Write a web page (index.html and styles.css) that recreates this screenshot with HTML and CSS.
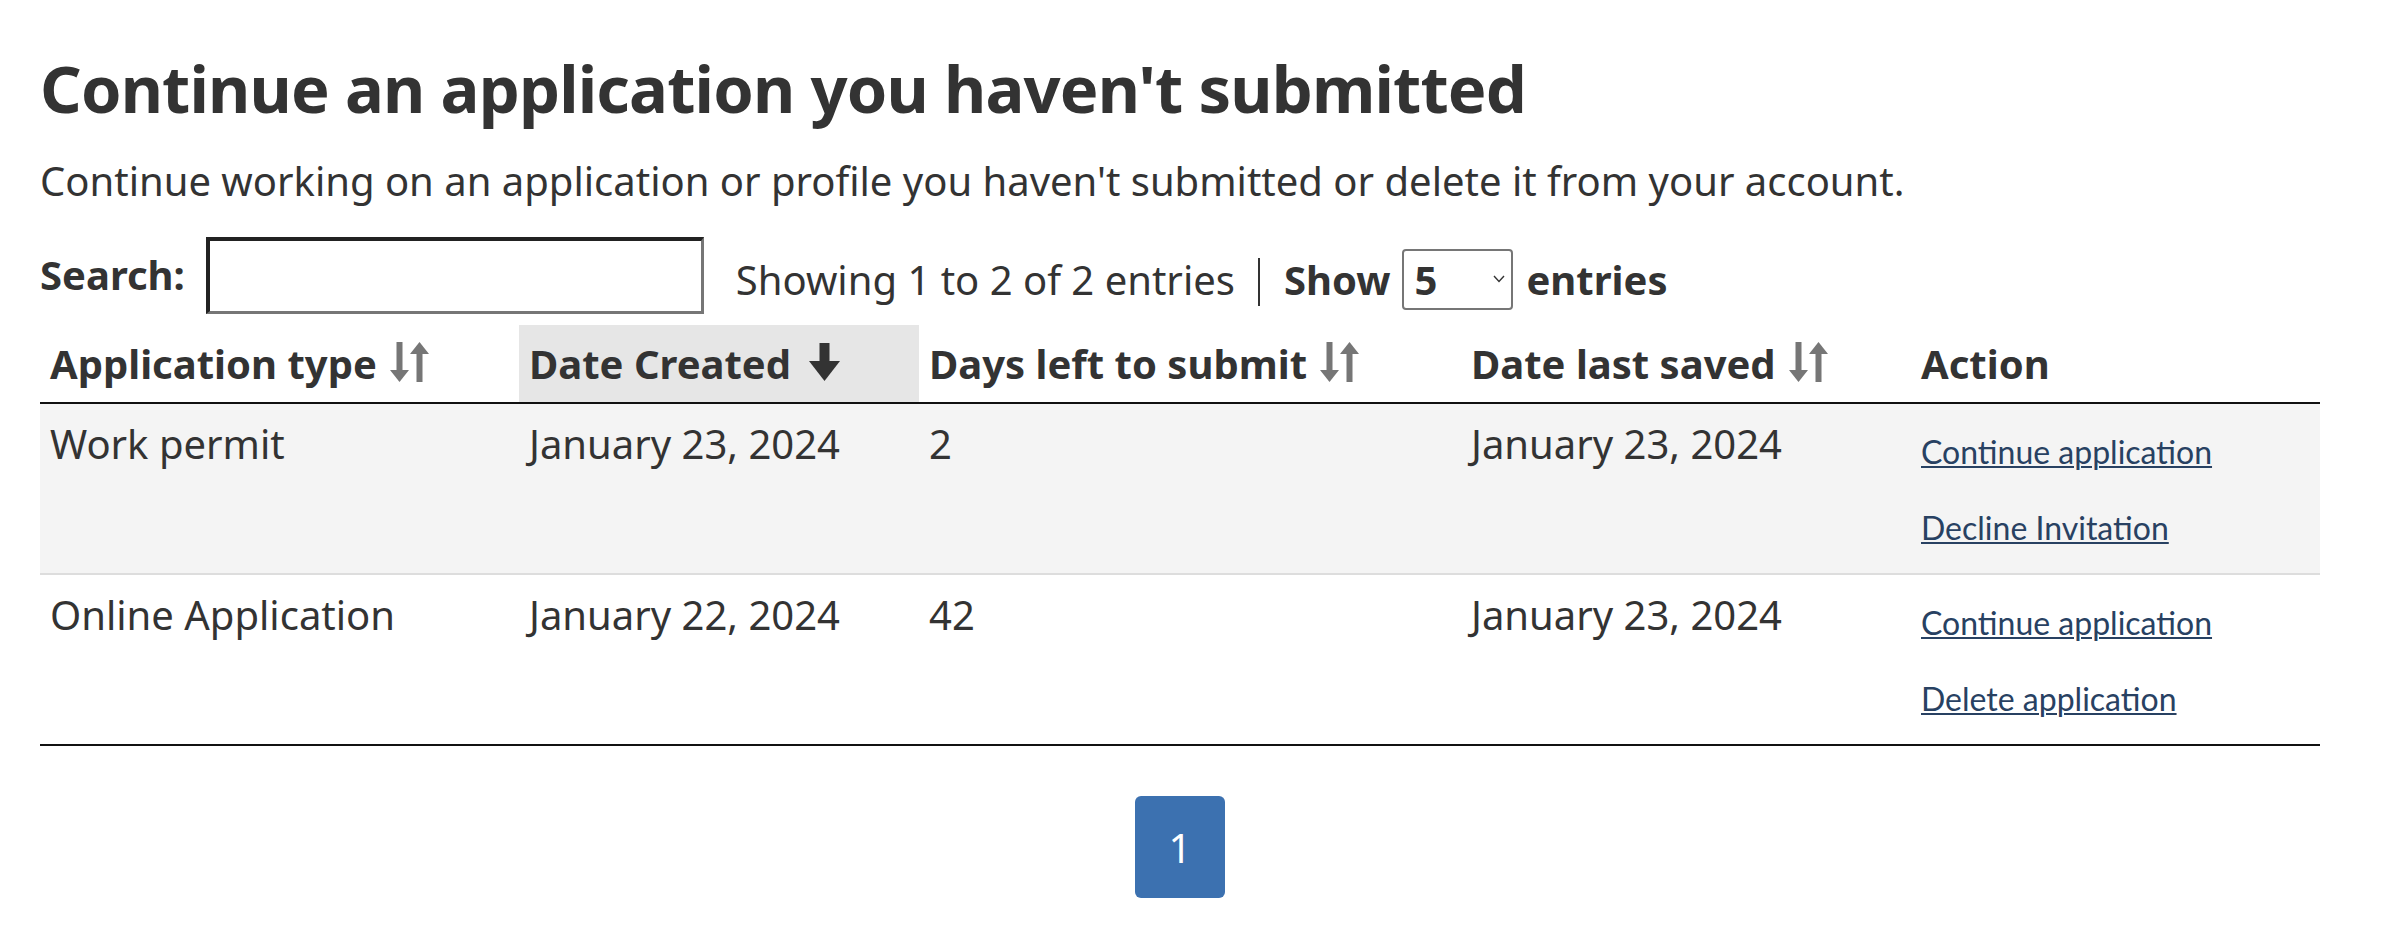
FILE: index.html
```html
<!DOCTYPE html>
<html lang="en">
<head>
<meta charset="utf-8">
<title>Continue an application</title>
<link rel="stylesheet" href="styles.css">
</head>
<body>
<main class="page">
  <h1 class="title">Continue an application you haven't submitted</h1>
  <p class="lead">Continue working on an application or profile you haven't submitted or delete it from your account.</p>

  <div class="controls">
    <label class="search-label" for="q">Search:</label>
    <input class="search-input" id="q" type="text">
    <div class="info-bar">
      <span class="info">Showing 1 to 2 of 2 entries</span>
      <span class="divider"></span>
      <span class="show-label">Show</span>
      <span class="select-wrap">
        <select class="length"><option>5</option><option>10</option></select>
        <svg class="chev" viewBox="0 0 12 8" aria-hidden="true"><polyline points="1,1 6,6.5 11,1" fill="none" stroke="#333" stroke-width="1.4"/></svg>
      </span>
      <span class="show-label">entries</span>
    </div>
  </div>

  <table class="apps">
    <colgroup>
      <col class="c1"><col class="c2"><col class="c3"><col class="c4"><col class="c5">
    </colgroup>
    <thead>
      <tr>
        <th>Application type<svg class="sort" viewBox="0 0 40 40" aria-hidden="true"><rect x="6.5" y="0" width="6" height="30"/><polygon points="0,28 19,28 9.5,40"/><polygon points="20,12 39,12 29.5,0"/><rect x="26.5" y="10" width="6" height="30"/></svg></th>
        <th class="sorted">Date Created<svg class="arrow" viewBox="0 0 31 38" aria-hidden="true"><rect x="10.5" y="0" width="10" height="22"/><polygon points="0,18 31,18 15.5,38"/></svg></th>
        <th>Days left to submit<svg class="sort" viewBox="0 0 40 40" aria-hidden="true"><rect x="6.5" y="0" width="6" height="30"/><polygon points="0,28 19,28 9.5,40"/><polygon points="20,12 39,12 29.5,0"/><rect x="26.5" y="10" width="6" height="30"/></svg></th>
        <th>Date last saved<svg class="sort" viewBox="0 0 40 40" aria-hidden="true"><rect x="6.5" y="0" width="6" height="30"/><polygon points="0,28 19,28 9.5,40"/><polygon points="20,12 39,12 29.5,0"/><rect x="26.5" y="10" width="6" height="30"/></svg></th>
        <th>Action</th>
      </tr>
    </thead>
    <tbody>
      <tr>
        <td>Work permit</td>
        <td>January 23, 2024</td>
        <td>2</td>
        <td>January 23, 2024</td>
        <td><div class="actions"><a href="#">Continue application</a><a href="#">Decline Invitation</a></div></td>
      </tr>
      <tr>
        <td>Online Application</td>
        <td>January 22, 2024</td>
        <td>42</td>
        <td>January 23, 2024</td>
        <td><div class="actions"><a href="#">Continue application</a><a href="#">Delete application</a></div></td>
      </tr>
    </tbody>
  </table>

  <nav class="pager" aria-label="Pagination"><span class="page-btn">1</span></nav>
</main>
</body>
</html>
```

FILE: styles.css
```css
* { box-sizing: border-box; }

body {
  margin: 0;
  font-family: "Noto Sans", "Open Sans", sans-serif;
  color: #333;
  background: #fff;
}

.page {
  padding: 0 72px 0 40px;
}

.title {
  font-size: 65px;
  font-weight: 700;
  letter-spacing: -0.83px;
  line-height: 78px;
  margin: 49px 0 0;
}

.lead {
  font-size: 40px;
  line-height: 60px;
  margin: 24px 0 0;
}

.controls {
  display: flex;
  align-items: center;
  height: 77px;
  margin-top: 25.5px;
  font-size: 40px;
  line-height: 60px;
}

.search-label {
  font-weight: 700;
  margin-right: 21px;
}

.search-input {
  width: 498px;
  height: 77px;
  margin: 0 32px 0 0;
  padding: 0 10px;
  border-style: solid;
  border-width: 4px 3px 3px 4px;
  border-color: #222 #767676 #767676 #222;
  background: #fff;
  font: inherit;
  color: #333;
}

.info-bar {
  display: flex;
  align-items: center;
  margin-top: 9px;
}

.divider {
  width: 2px;
  height: 48px;
  background: #333;
  margin: 4px 24px 0 23px;
}

.show-label {
  font-weight: 700;
}

.select-wrap {
  position: relative;
  display: block;
  margin: 0 13px 0 12px;
}

.length {
  appearance: none;
  -webkit-appearance: none;
  display: block;
  width: 111px;
  height: 61px;
  border: 2px solid #767676;
  border-radius: 4px;
  padding: 0 0 0 10px;
  background: #fff;
  color: #333;
  font: 700 40px/1 "Noto Sans", sans-serif;
}

.chev {
  position: absolute;
  right: 8px;
  top: 26px;
  width: 12px;
  height: 8px;
  pointer-events: none;
}

.apps {
  width: 2280px;
  margin-top: 11px;
  border-collapse: collapse;
  table-layout: fixed;
  font-size: 40px;
  line-height: 60px;
  border-bottom: 2.5px solid #111;
}

.c1 { width: 479px; }
.c2 { width: 400px; }
.c3 { width: 542px; }
.c4 { width: 450px; }
.c5 { width: 409px; }

.apps th {
  text-align: left;
  font-weight: 700;
  padding: 9px 10px 8px;
  border-bottom: 2px solid #111;
  white-space: nowrap;
}

.apps th.sorted {
  background: #e6e6e6;
}

.sort {
  width: 40px;
  height: 40px;
  margin-left: 13px;
  vertical-align: -3px;
  fill: #767676;
}

.arrow {
  width: 31px;
  height: 38px;
  margin-left: 18px;
  vertical-align: -2px;
  fill: #333;
}

.apps td {
  padding: 10px;
  vertical-align: top;
  border-top: 2px solid #ddd;
}

.apps tbody tr:nth-child(odd) td {
  background: #f4f4f4;
}

.actions {
  display: flex;
  flex-direction: column;
  align-items: flex-start;
  gap: 28px;
  padding: 14px 0 11px;
}

.actions a {
  font-family: Lato, "Noto Sans", sans-serif;
  font-size: 32px;
  line-height: 48px;
  color: #284162;
  text-decoration: underline;
  text-decoration-thickness: 2px;
  text-underline-offset: 2px;
}

.pager {
  display: flex;
  justify-content: center;
  width: 2280px;
  margin-top: 50.5px;
}

.page-btn {
  display: flex;
  align-items: center;
  justify-content: center;
  width: 90px;
  height: 102px;
  border-radius: 6px;
  background: #3c71b0;
  color: #fff;
  font-size: 40px;
}
```
